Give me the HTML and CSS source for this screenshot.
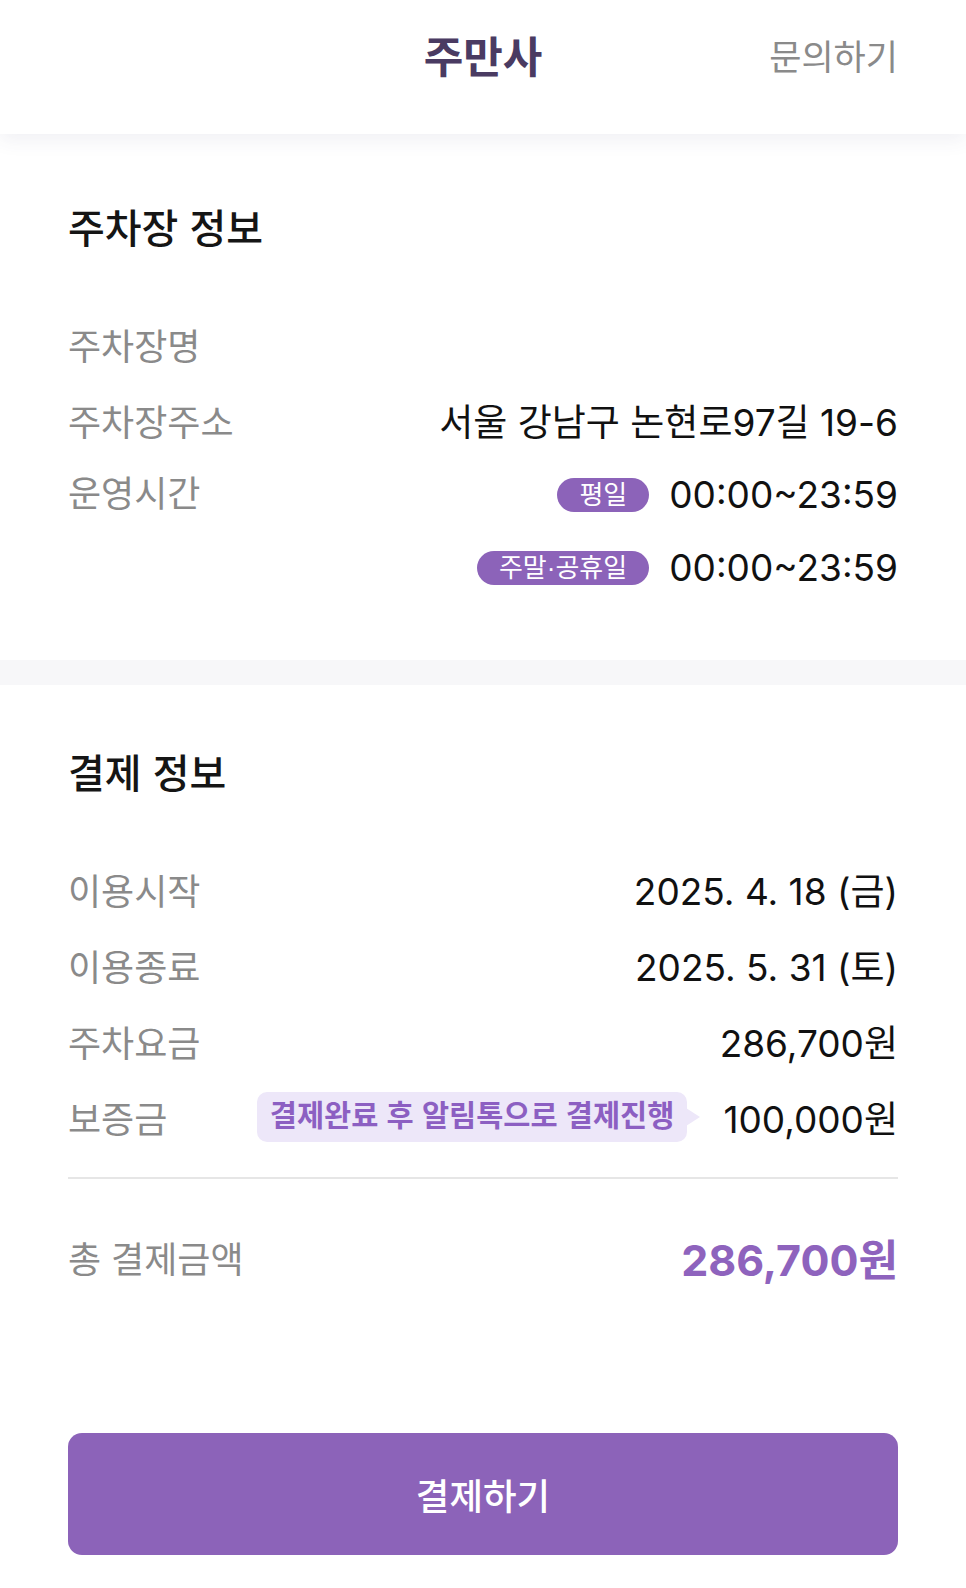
FILE: index.html
```html
<!DOCTYPE html>
<html lang="ko">

<head>
	<meta charset="utf-8">
	<title>주만사 - 결제</title>
	<link rel="stylesheet" href="styles.css">
</head>

<body>
	<header class="top-bar">
		<span></span>
		<h1 class="brand">주만사</h1>
		<a class="ask" href="#">문의하기</a>
	</header>

	<section class="block">
		<h2 class="block-title">주차장 정보</h2>
		<div class="row">
			<span class="label">주차장명</span>
			<span class="value"></span>
		</div>
		<div class="row">
			<span class="label">주차장주소</span>
			<span class="value">서울 강남구 논현로97길 19-6</span>
		</div>
		<div class="row row-top">
			<span class="label">운영시간</span>
			<div class="hours">
				<div class="hours-line">
					<span class="badge">평일</span>
					<span class="value">00:00~23:59</span>
				</div>
				<div class="hours-line">
					<span class="badge">주말·공휴일</span>
					<span class="value">00:00~23:59</span>
				</div>
			</div>
		</div>
	</section>

	<div class="band"></div>

	<section class="block block-pay">
		<h2 class="block-title">결제 정보</h2>
		<div class="row">
			<span class="label">이용시작</span>
			<span class="value">2025. 4. 18 (금)</span>
		</div>
		<div class="row">
			<span class="label">이용종료</span>
			<span class="value">2025. 5. 31 (토)</span>
		</div>
		<div class="row">
			<span class="label">주차요금</span>
			<span class="value">286,700원</span>
		</div>
		<div class="row">
			<span class="label">보증금</span>
			<div class="deposit">
				<span class="bubble">결제완료 후 알림톡으로 결제진행</span>
				<span class="value">100,000원</span>
			</div>
		</div>
		<hr class="line">
		<div class="row total">
			<span class="label">총 결제금액</span>
			<span class="total-value">286,700원</span>
		</div>
	</section>

	<div class="actions">
		<button class="pay-btn">결제하기</button>
	</div>
</body>

</html>
```

FILE: styles.css
```css
body {
	margin: 0;
	background-color: white;
	color: #111;
	font-family: "Liberation Sans", "Noto Sans CJK KR", sans-serif;
}
.top-bar {
	display: grid;
	grid-template-columns: 1fr auto 1fr;
	align-items: start;
	height: 134px;
	padding: 28px 68px 0;
	box-sizing: border-box;
	background-color: white;
	box-shadow: 0 6px 18px rgba(70, 70, 110, 0.08);
	position: relative;
}
.brand {
	margin: 0;
	font-size: 43px;
	line-height: 60px;
	font-weight: 700;
	color: #4a3b62;
}
.ask {
	justify-self: end;
	font-size: 35px;
	line-height: 60px;
	color: #8a8a8a;
	text-decoration: none;
}
.block {
	padding: 66px 68px 56px;
}
.block-pay {
	padding-top: 60px;
	padding-bottom: 0;
}
.block-title {
	margin: 0 0 48px;
	font-size: 40px;
	line-height: 58px;
	font-weight: 500;
	color: #151515;
}
.row {
	display: flex;
	justify-content: space-between;
	align-items: center;
	height: 76px;
}
.row-top {
	align-items: flex-start;
	height: auto;
}
.row-top .label {
	line-height: 73px;
}
.label {
	font-size: 36px;
	color: #8a8a8a;
	white-space: nowrap;
}
.value {
	font-family: "Inter", "Noto Sans CJK KR", sans-serif;
	font-size: 37px;
	color: #111;
	white-space: nowrap;
}
.hours {
	display: flex;
	flex-direction: column;
	align-items: flex-end;
}
.hours-line {
	display: flex;
	align-items: center;
	gap: 20px;
	height: 73px;
}
.badge {
	padding: 0 22px;
	height: 34px;
	line-height: 34px;
	border-radius: 17px;
	background-color: #8c63b9;
	color: white;
	font-size: 26px;
}
.band {
	height: 25px;
	background-color: #f7f7f9;
}
.deposit {
	display: flex;
	align-items: center;
	gap: 36px;
}
.bubble {
	position: relative;
	padding: 0 13px;
	height: 50px;
	line-height: 48px;
	border-radius: 10px;
	background-color: #ede7f9;
	color: #8c5fc2;
	font-size: 29.5px;
	font-weight: 700;
}
.bubble::after {
	content: "";
	position: absolute;
	right: -13px;
	top: 50%;
	margin-top: -9px;
	border-left: 14px solid #ede7f9;
	border-top: 9px solid transparent;
	border-bottom: 9px solid transparent;
}
.line {
	margin: 22px 0 40px;
	border: 0;
	border-top: 2px solid #e6e6e6;
}
.total-value {
	font-family: "Inter", "Noto Sans CJK KR", sans-serif;
	font-size: 43px;
	font-weight: 700;
	color: #8e63bd;
}
.actions {
	padding: 138px 68px 31px;
}
.pay-btn {
	width: 100%;
	height: 122px;
	border: 0;
	border-radius: 14px;
	background-color: #8c63b9;
	color: white;
	font-family: "Liberation Sans", "Noto Sans CJK KR", sans-serif;
	font-size: 36.5px;
	font-weight: 500;
}
```
